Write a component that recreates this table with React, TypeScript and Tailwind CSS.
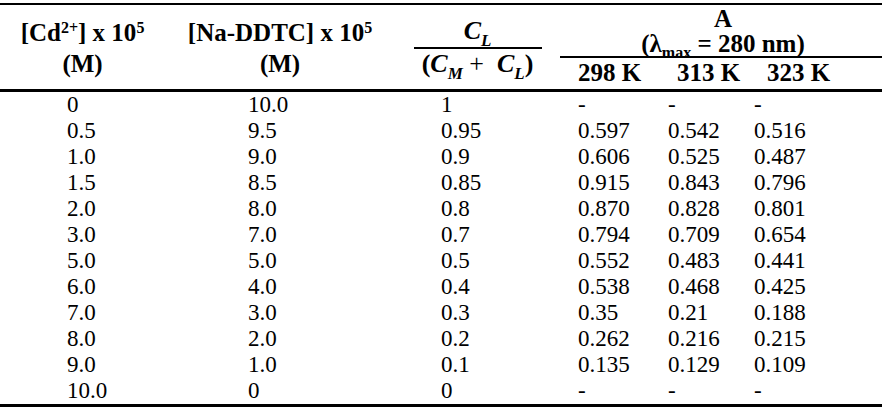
const ROWS: [string, string, string, string, string, string][] = [
  ['0', '10.0', '1', '-', '-', '-'],
  ['0.5', '9.5', '0.95', '0.597', '0.542', '0.516'],
  ['1.0', '9.0', '0.9', '0.606', '0.525', '0.487'],
  ['1.5', '8.5', '0.85', '0.915', '0.843', '0.796'],
  ['2.0', '8.0', '0.8', '0.870', '0.828', '0.801'],
  ['3.0', '7.0', '0.7', '0.794', '0.709', '0.654'],
  ['5.0', '5.0', '0.5', '0.552', '0.483', '0.441'],
  ['6.0', '4.0', '0.4', '0.538', '0.468', '0.425'],
  ['7.0', '3.0', '0.3', '0.35', '0.21', '0.188'],
  ['8.0', '2.0', '0.2', '0.262', '0.216', '0.215'],
  ['9.0', '1.0', '0.1', '0.135', '0.129', '0.109'],
  ['10.0', '0', '0', '-', '-', '-'],
];

const COLS = 'grid grid-cols-[165px_230px_165px_90px_95px_137px]';

// C_L / (C_M + C_L) header cell
function Fraction() {
  return (
    <div className="row-span-3 flex flex-col items-center justify-center pt-[2px] text-[26px]">
      <div className="w-[128px] border-b-2 border-black text-center leading-[26px] pb-[3px] italic font-bold">
        C<sub className="text-[17px] align-[-3px]">L</sub>
      </div>
      <div className="text-center leading-[30px] font-bold whitespace-pre">
        (<span className="italic">C</span>
        <sub className="italic text-[17px] align-[-3px]">M</sub>
        <span className="font-normal">{' +  '}</span>
        <span className="italic">C</span>
        <sub className="italic text-[17px] align-[-3px]">L</sub>)
      </div>
    </div>
  );
}

export default function App() {
  return (
    <div className="w-[882px] h-[409px] bg-white pt-[3px] text-black font-['Liberation_Serif','Times_New_Roman',serif]">
      <div className={`${COLS} grid-rows-[26px_27px_31px] border-t-2 border-b-[3px] border-black text-[25px] font-bold whitespace-nowrap`}>
        <div className="row-span-3 flex flex-col items-center justify-center leading-[31px] pt-[2px]">
          <span>
            [Cd<sup className="text-[16px]">2+</sup>] x 10<sup className="text-[16px]">5</sup>
          </span>
          <span>(M)</span>
        </div>
        <div className="row-span-3 flex flex-col items-center justify-center leading-[31px] pt-[2px]">
          <span>
            [Na-DDTC] x 10<sup className="text-[16px]">5</sup>
          </span>
          <span>(M)</span>
        </div>
        <Fraction />
        <div className="col-span-3 flex items-end justify-center leading-[24px] pl-[4px]">A</div>
        <div className="col-span-3 flex items-end justify-center leading-[25px] pl-[4px] border-b-2 border-black">
          <span>
            (λ<sub className="text-[16px] align-[-2px]">max</sub> = 280 nm)
          </span>
        </div>
        <div className="pl-[18px] leading-[30px]">298 K</div>
        <div className="pl-[27px] leading-[30px]">313 K</div>
        <div className="pl-[22px] leading-[30px]">323 K</div>
      </div>
      <div className="border-b-[3px] border-black text-[23px]">
        {ROWS.map((r) => (
          <div key={r[0]} className={`${COLS} h-[26px] leading-[26px]`}>
            <div className="pl-[67px]">{r[0]}</div>
            <div className="pl-[83px]">{r[1]}</div>
            <div className="pl-[46px]">{r[2]}</div>
            <div className="pl-[18px]">{r[3]}</div>
            <div className="pl-[18px]">{r[4]}</div>
            <div className="pl-[9px]">{r[5]}</div>
          </div>
        ))}
      </div>
    </div>
  );
}
